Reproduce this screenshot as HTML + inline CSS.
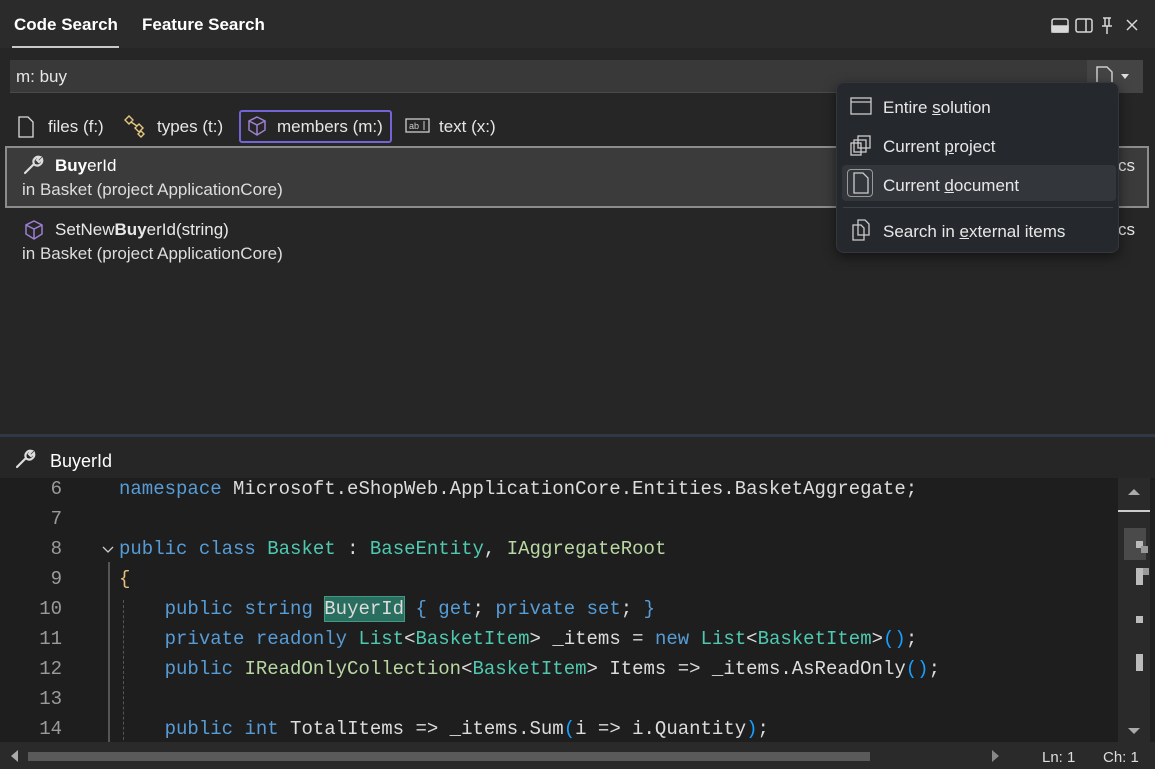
<!DOCTYPE html>
<html><head><meta charset="utf-8"><style>
*{box-sizing:border-box;margin:0;padding:0}
body{width:1155px;height:769px;background:#1f1f1f;font-family:"Liberation Sans",sans-serif;color:#e6e6e6;position:relative;overflow:hidden;font-size:16px}
.abs{position:absolute}
.tab{position:absolute;top:15px;font-weight:bold;font-size:17px;color:#fff}
.code{position:absolute;left:0;top:478px;width:1118px;height:264px;background:#1e1e1e;font-family:"Liberation Mono",monospace;font-size:19px;overflow:hidden}
.ln{position:absolute;left:0;width:62px;text-align:right;color:#9a9a9a}
.cl{position:absolute;left:119px;white-space:pre;color:#dcdcdc}
.k{color:#569cd6}.t{color:#4ec9b0}.y{color:#e5c07b}.i{color:#b8d7a3}.p{color:#179fff}
.menu div.it{position:absolute;left:46px;font-size:17px;color:#e8e8e8}
</style></head><body>
<div class="abs" style="left:0;top:0;width:1155px;height:48px;background:#2b2b2b"></div>
<div class="tab" style="left:14px">Code Search</div>
<div class="tab" style="left:142px">Feature Search</div>
<div class="abs" style="left:12px;top:46px;width:107px;height:3px;background:#c8c8c8"></div>
<svg class="abs" style="left:1050px;top:16px" width="95" height="20" viewBox="0 0 95 20" fill="none" stroke="#d8d8d8" stroke-width="1.5">
<rect x="2" y="3" width="16" height="13" rx="2"/><rect x="2" y="10" width="16" height="6" fill="#d8d8d8"/>
<rect x="26" y="3" width="16" height="13" rx="2"/><line x1="36" y1="3" x2="36" y2="16"/>
<path d="M53 2h8M55 2v8M59 2v8M52 10h10M57 10v8"/>
<path d="M77 4l10 10M87 4l-10 10"/></svg>
<div class="abs" style="left:0;top:48px;width:1155px;height:387px;background:#262626"></div>
<div class="abs" style="left:10px;top:60px;width:1133px;height:33px;background:#393939;border-bottom:1px solid #4a4a4a"></div>
<div class="abs" style="left:16px;top:67px;font-size:17px">m: buy</div>
<div class="abs" style="left:1087px;top:60px;width:56px;height:33px;background:#444"></div>
<svg class="abs" style="left:1094px;top:65px" width="45" height="22"><path d="M3 2h10l5 5v13H3z" fill="none" stroke="#ccc" stroke-width="1.5"/><path d="M27 9h8l-4 5z" fill="#ddd"/></svg>
<svg class="abs" style="left:17px;top:116px" width="18" height="22"><path d="M2 1h9l5 5v15H2z" fill="none" stroke="#ddd" stroke-width="1.3"/></svg>
<div class="abs" style="left:48px;top:117px;font-size:17px">files (f:)</div>
<svg class="abs" style="left:123px;top:114px" width="26" height="24" fill="none" stroke="#e3c77e" stroke-width="1.4"><path d="M2 6l4-4 4 4-4 4zM12 14l4-4 4 4-4 4zM15 20l3-3 3 3-3 3zM8 8l6 4"/></svg>
<div class="abs" style="left:157px;top:117px;font-size:17px">types (t:)</div>
<div class="abs" style="left:239px;top:110px;width:153px;height:33px;border:2px solid #7264d6;border-radius:3px"></div>
<svg class="abs" style="left:246px;top:115px" width="22" height="22" fill="none" stroke="#9d7fd2" stroke-width="1.5"><path d="M11 2l8 4v9l-8 5-8-5V6zM3 6l8 4 8-4M11 10v10"/></svg>
<div class="abs" style="left:277px;top:117px;font-size:17px">members (m:)</div>
<svg class="abs" style="left:405px;top:117px" width="26" height="18"><rect x="1" y="2" width="23" height="13" fill="none" stroke="#ccc" stroke-width="1.3"/><text x="4" y="12" font-size="9" fill="#ccc" font-family="Liberation Sans">ab</text><path d="M19 4v9" stroke="#ccc"/></svg>
<div class="abs" style="left:439px;top:117px;font-size:17px">text (x:)</div>
<div class="abs" style="left:5px;top:146px;width:1144px;height:62px;background:#3b3b3b;border:2px solid #8c8c8c"></div>
<svg class="abs" style="left:22px;top:154px" width="24" height="22"><path d="M3 19l9-9M12 10a5 5 0 0 1 6-7l-3 3 2 2 3-3a5 5 0 0 1-7 6" fill="none" stroke="#ddd" stroke-width="2.2" stroke-linecap="round"/></svg>
<div class="abs" style="left:55px;top:156px;font-size:17px;color:#fff"><b>Buy</b>erId</div>
<div class="abs" style="left:22px;top:180px;font-size:17px;color:#ddd">in Basket (project ApplicationCore)</div>
<svg class="abs" style="left:23px;top:219px" width="22" height="22" fill="none" stroke="#9d7fd2" stroke-width="1.5"><path d="M11 2l8 4v9l-8 5-8-5V6zM3 6l8 4 8-4M11 10v10"/></svg>
<div class="abs" style="left:55px;top:220px;font-size:17px;color:#e8e8e8">SetNew<b>Buy</b>erId(string)</div>
<div class="abs" style="left:22px;top:244px;font-size:17px;color:#ddd">in Basket (project ApplicationCore)</div>
<div class="abs" style="left:1118px;top:156px;font-size:17px">cs</div>
<div class="abs" style="left:1118px;top:220px;font-size:17px">cs</div>
<div class="abs" style="left:0;top:434px;width:1155px;height:3px;background:#2e3945"></div>
<div class="abs" style="left:0;top:437px;width:1155px;height:41px;background:#262626"></div>
<svg class="abs" style="left:14px;top:448px" width="24" height="22"><path d="M3 19l9-9M12 10a5 5 0 0 1 6-7l-3 3 2 2 3-3a5 5 0 0 1-7 6" fill="none" stroke="#ddd" stroke-width="2.2" stroke-linecap="round"/></svg>
<div class="abs" style="left:50px;top:451px;font-size:18px;color:#fff">BuyerId</div>
<div class="code">
<div class="ln" style="top:0">6</div><div class="ln" style="top:30px">7</div><div class="ln" style="top:60px">8</div><div class="ln" style="top:90px">9</div><div class="ln" style="top:120px">10</div><div class="ln" style="top:150px">11</div><div class="ln" style="top:180px">12</div><div class="ln" style="top:210px">13</div><div class="ln" style="top:240px">14</div>
<div class="cl" style="top:0"><span class="k">namespace</span> Microsoft.eShopWeb.ApplicationCore.Entities.BasketAggregate;</div>
<svg class="abs" style="left:102px;top:67px" width="14" height="10"><path d="M1 2l5 5 5-5" fill="none" stroke="#ccc" stroke-width="1.3"/></svg>
<div class="cl" style="top:60px"><span class="k">public</span> <span class="k">class</span> <span class="t">Basket</span> : <span class="t">BaseEntity</span>, <span class="i">IAggregateRoot</span></div>
<div class="cl" style="top:90px"><span class="y">{</span></div>
<div class="abs" style="left:108px;top:84px;width:2px;height:190px;background:#555"></div>
<div class="abs" style="left:123px;top:122px;width:0;height:150px;border-left:1px dashed #555"></div>
<div class="abs" style="left:324px;top:118px;width:81px;height:26px;background:#2a6e5f;border:1px solid #3f9a86"></div>
<div class="cl" style="top:120px">    <span class="k">public</span> <span class="k">string</span> BuyerId <span class="k">{</span> <span class="k">get</span>; <span class="k">private</span> <span class="k">set</span>; <span class="k">}</span></div>
<div class="cl" style="top:150px">    <span class="k">private</span> <span class="k">readonly</span> <span class="t">List</span>&lt;<span class="t">BasketItem</span>&gt; _items = <span class="k">new</span> <span class="t">List</span>&lt;<span class="t">BasketItem</span>&gt;<span class="p">()</span>;</div>
<div class="cl" style="top:180px">    <span class="k">public</span> <span class="i">IReadOnlyCollection</span>&lt;<span class="t">BasketItem</span>&gt; Items =&gt; _items.AsReadOnly<span class="p">()</span>;</div>
<div class="cl" style="top:240px">    <span class="k">public</span> <span class="k">int</span> TotalItems =&gt; _items.Sum<span class="p">(</span>i =&gt; i.Quantity<span class="p">)</span>;</div>
</div>
<div class="abs" style="left:1118px;top:478px;width:32px;height:264px;background:#2a2a2a"></div>
<svg class="abs" style="left:1118px;top:478px" width="32" height="264"><path d="M10 17h12l-6-6z" fill="#aaa"/><rect x="0" y="32" width="32" height="2" fill="#ccc"/><rect x="6" y="50" width="22" height="32" fill="#4a4a4a"/><rect x="18" y="63" width="7" height="7" fill="#bbb"/><rect x="23" y="68" width="7" height="7" fill="#999"/><rect x="18" y="90" width="7" height="17" fill="#bbb"/><rect x="25" y="90" width="6" height="7" fill="#999"/><rect x="18" y="138" width="7" height="7" fill="#bbb"/><rect x="18" y="176" width="7" height="17" fill="#bbb"/><path d="M10 250h12l-6 6z" fill="#aaa"/></svg>
<div class="abs" style="left:0;top:742px;width:1155px;height:27px;background:#2a2a2a"></div>
<div class="abs" style="left:28px;top:752px;width:842px;height:9px;background:#5a5a5a"></div>
<svg class="abs" style="left:8px;top:748px" width="12" height="16"><path d="M10 2v12L3 8z" fill="#aaa"/></svg>
<svg class="abs" style="left:990px;top:748px" width="12" height="16"><path d="M2 2v12l7-6z" fill="#888"/></svg>
<div class="abs" style="left:1042px;top:749px;font-size:15px;color:#ddd">Ln: 1</div>
<div class="abs" style="left:1103px;top:749px;font-size:15px;color:#ddd">Ch: 1</div>
<div class="abs menu" style="left:836px;top:82px;width:283px;height:171px;background:#25282c;border:1px solid #33373c;border-radius:8px;box-shadow:0 4px 12px rgba(0,0,0,.5)">
<svg class="abs" style="left:13px;top:14px" width="22" height="20" fill="none" stroke="#ccc" stroke-width="1.3"><rect x="1" y="1" width="20" height="16"/><line x1="1" y1="5" x2="21" y2="5"/></svg>
<div class="it" style="top:15px">Entire <u>s</u>olution</div>
<svg class="abs" style="left:13px;top:52px" width="22" height="22" fill="none" stroke="#ccc" stroke-width="1.3"><rect x="8" y="1" width="12" height="12"/><rect x="4" y="5" width="12" height="12"/><rect x="1" y="8" width="10" height="12"/></svg>
<div class="it" style="top:54px">Current <u>p</u>roject</div>
<div class="abs" style="left:5px;top:82px;width:274px;height:36px;background:#33373c;border-radius:4px"></div>
<div class="abs" style="left:10px;top:86px;width:26px;height:28px;border:1px solid #999;border-radius:4px"></div>
<svg class="abs" style="left:15px;top:89px" width="18" height="22"><path d="M2 1h9l5 5v15H2z" fill="none" stroke="#ccc" stroke-width="1.3"/></svg>
<div class="it" style="top:93px">Current <u>d</u>ocument</div>
<div class="abs" style="left:6px;top:124px;width:270px;height:1px;background:#3d4248"></div>
<svg class="abs" style="left:14px;top:136px" width="20" height="24" fill="none" stroke="#ccc" stroke-width="1.3"><path d="M7 1h7l4 4v11H7z"/><path d="M2 6h8l3 3v12H2z"/></svg>
<div class="it" style="top:139px">Search in <u>e</u>xternal items</div>
</div>
</body></html>
